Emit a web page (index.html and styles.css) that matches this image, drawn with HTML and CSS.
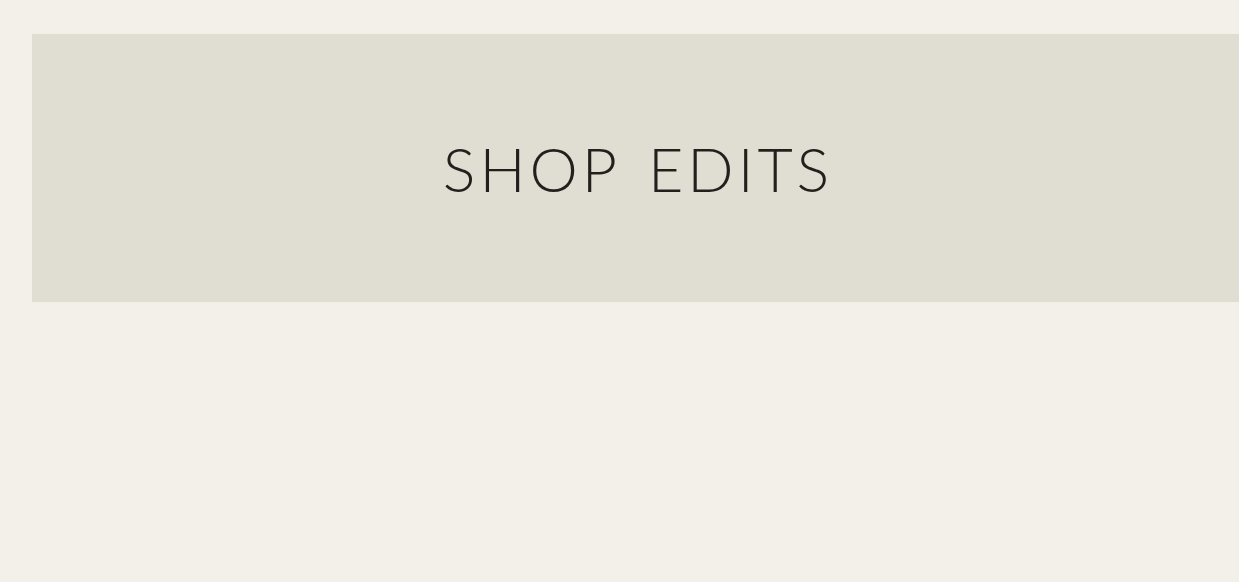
FILE: index.html
```html
<!DOCTYPE html>
<html lang="en">
<head>
    <meta charset="UTF-8">
    <meta name="viewport" content="width=device-width, initial-scale=1.0">
    <title>Shop Edits</title>
    <link rel="stylesheet" href="styles.css">
</head>
<body>
    <div class="page">
        <a class="edits-banner" href="#">
            <h2 class="edits-title">SHOP EDITS</h2>
        </a>
    </div>
</body>
</html>
```

FILE: styles.css
```css
body {
    margin: 0;
    background-color: #f3f0e9;
    font-family: Lato, "Liberation Sans", sans-serif;
    overflow: hidden;
}
.page {
    padding: 34px 0 0 32px;
    height: 548px;
}
.edits-banner {
    display: flex;
    justify-content: center;
    align-items: center;
    width: 1208px;
    height: 268px;
    background-color: #e0ddd2;
    color: #231f1c;
    text-decoration: none;
}
.edits-title {
    margin: 0;
    padding-left: 4px;
    font-size: 61px;
    font-weight: 300;
    letter-spacing: 4px;
    word-spacing: 8px;
    line-height: 1;
}
```
